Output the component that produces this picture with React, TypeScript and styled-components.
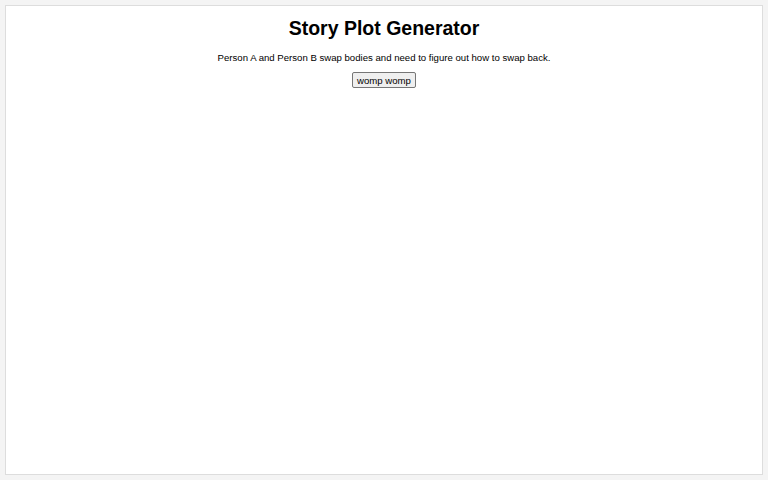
import { createGlobalStyle } from "styled-components";
import styled from "styled-components";

const GlobalStyle = createGlobalStyle`
  html, body {
    margin: 0;
    padding: 0;
    background: #f4f4f4;
    font-family: "Liberation Sans", Arial, sans-serif;
  }
`;

const Page = styled.div`
  padding: 5px;
  height: 100vh;
  box-sizing: border-box;
`;

const Card = styled.div`
  height: 100%;
  box-sizing: border-box;
  background: #fff;
  border: 1px solid #ddd;
  display: flex;
  flex-direction: column;
  align-items: center;
  padding-top: 11px;
`;

const Title = styled.h1`
  font-size: 19.5px;
  font-weight: bold;
  margin: 0 0 12px;
  color: #000;
`;

const Plot = styled.p`
  font-size: 9.6px;
  margin: 0 0 9px;
  color: #000;
`;

const Button = styled.button`
  font-family: "Liberation Sans", Arial, sans-serif;
  font-size: 9.6px;
  height: 16px;
  padding: 0 4px;
  background: #efefef;
  border: 1px solid #767676;
  border-radius: 2px;
  color: #000;
`;

export default function App() {
  return (
    <>
      <GlobalStyle />
      <Page>
        <Card>
          <Title>Story Plot Generator</Title>
          <Plot>Person A and Person B swap bodies and need to figure out how to swap back.</Plot>
          <Button>womp womp</Button>
        </Card>
      </Page>
    </>
  );
}
